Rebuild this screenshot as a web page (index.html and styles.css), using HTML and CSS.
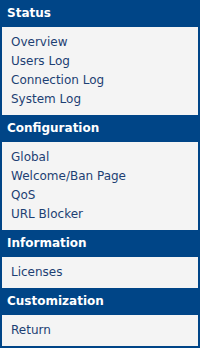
FILE: index.html
```html
<!DOCTYPE html>
<html lang="en">
  <head>
    <meta charset="UTF-8">
    <title>Menu</title>
    <link rel="stylesheet" href="styles.css">
  </head>
  <body>
    <nav class="menu">
      <!-- Status -->
      <h2 class="menu-title">Status</h2>
      <ul class="menu-list">
        <li><a href="#">Overview</a></li>
        <li><a href="#">Users Log</a></li>
        <li><a href="#">Connection Log</a></li>
        <li><a href="#">System Log</a></li>
      </ul>

      <!-- Configuration -->
      <h2 class="menu-title">Configuration</h2>
      <ul class="menu-list">
        <li><a href="#">Global</a></li>
        <li><a href="#">Welcome/Ban Page</a></li>
        <li><a href="#">QoS</a></li>
        <li><a href="#">URL Blocker</a></li>
      </ul>

      <!-- Information -->
      <h2 class="menu-title">Information</h2>
      <ul class="menu-list">
        <li><a href="#">Licenses</a></li>
      </ul>

      <!-- Customization -->
      <h2 class="menu-title">Customization</h2>
      <ul class="menu-list">
        <li><a href="#">Return</a></li>
      </ul>
    </nav>
  </body>
</html>
```

FILE: styles.css
```css
body {
  margin: 0;
  padding: 0;
  background: #004587;
  font-family: "DejaVu Sans", Verdana, sans-serif;
}

.menu {
  width: 200px;
  padding-bottom: 2px;
}

.menu-title {
  margin: 0;
  height: 27px;
  line-height: 27px;
  padding-left: 7px;
  color: #ffffff;
  font-size: 12px;
  font-weight: bold;
}

.menu-list {
  list-style: none;
  margin: 0 2px;
  padding: 6px 0 6px 9px;
  background: #f4f4f4;
}

.menu-list li {
  height: 19px;
  line-height: 19px;
  font-size: 12px;
}

.menu-list a {
  color: #1d3f73;
  text-decoration: none;
}
```
